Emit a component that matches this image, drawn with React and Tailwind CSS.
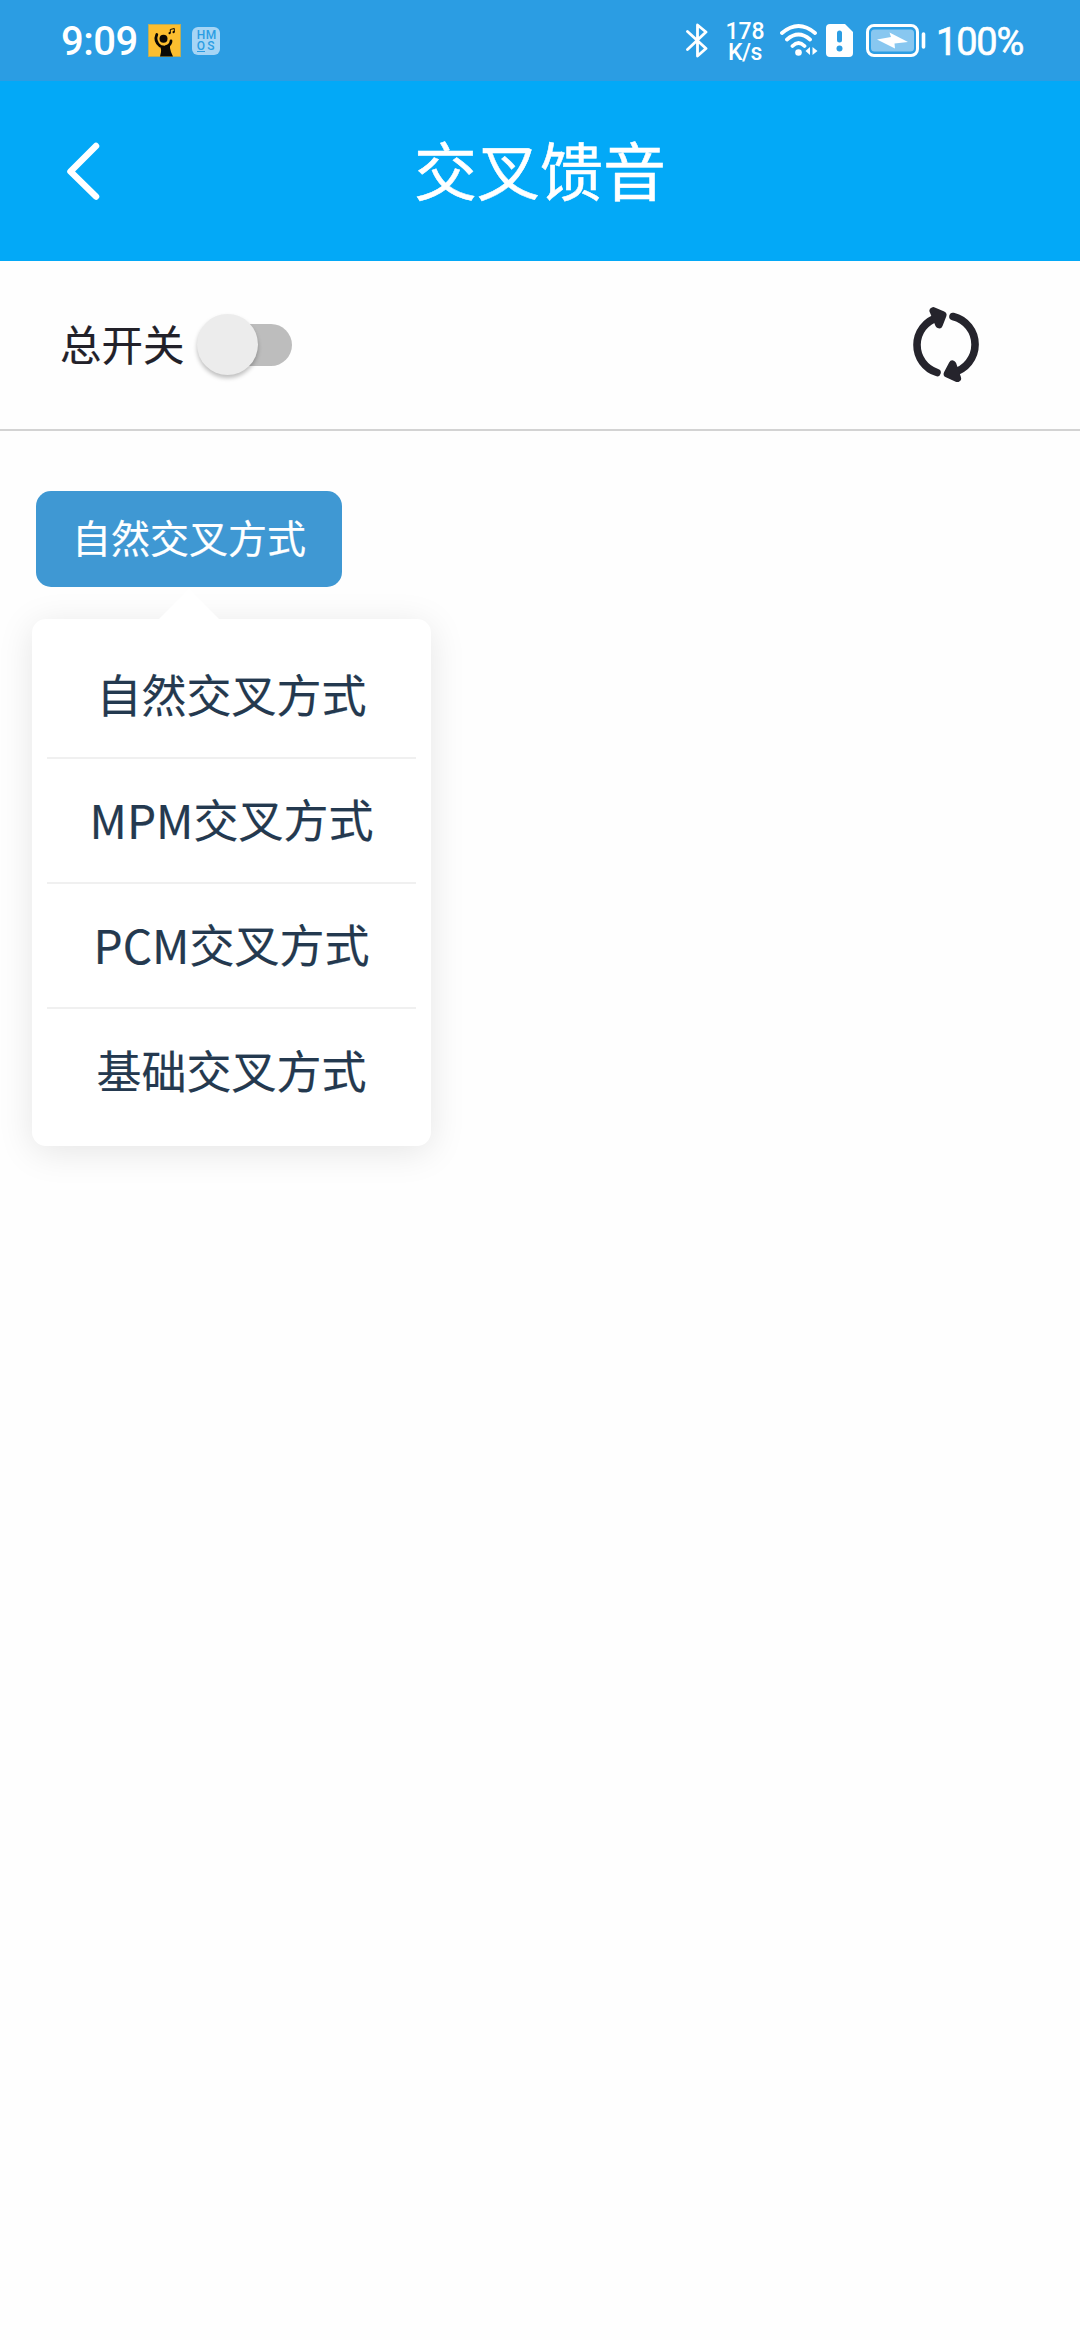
const options = [
  { latin: '', text: '自然交叉方式' },
  { latin: 'MPM', text: '交叉方式' },
  { latin: 'PCM', text: '交叉方式' },
  { latin: '', text: '基础交叉方式' },
];

function MusicAppIcon() {
  return (
    <svg className="ml-[11px] size-[33px]" viewBox="0 0 33 33">
      <rect width="33" height="33" fill="#b8ae5c" />
      <rect x="1" y="1" width="31" height="31" fill="#fcbe2f" />
      <circle cx="15.5" cy="14.800" r="4" fill="#0b0804" />
      <path d="M8.800 10.500 Q6 17 12 22 M23 17 Q23 21 18 22.500" fill="none" stroke="#0b0804" strokeWidth="2.800" strokeLinecap="round" />
      <path d="M10.500 20 Q16 23 22 20.500 Q21.500 24 23 28 L25 32.500 H12 L13 28 Q13.500 23.500 10.500 20 Z" fill="#0b0804" />
      <path d="M22.300 9 V5.500 L26.300 4.500 V8" fill="none" stroke="#0b0804" strokeWidth="1" />
      <circle cx="21.600" cy="9.200" r="1.100" fill="#0b0804" />
      <circle cx="25.600" cy="8.200" r="1.100" fill="#0b0804" />
    </svg>
  );
}

function StatusBar() {
  return (
    <div className="flex h-[81px] items-center bg-[#2b9de3] pr-[55px] pl-[61px] text-white">
      <span className="w-[76px] pt-[3px] text-[40px] leading-none font-medium tracking-[-0.5px] whitespace-nowrap">9:09</span>
      <MusicAppIcon />
      <div className="ml-[11px] grid size-[28px] grid-cols-2 place-items-center rounded-[6px] bg-[#a6d5f5] px-[4px] py-[3px] text-[12px] leading-[11px] font-medium text-[#2b9de3]">
        <span>H</span>
        <span>M</span>
        <span className="border-b border-[#2b9de3] leading-[10px]">O</span>
        <span>S</span>
      </div>

      <div className="ml-auto flex items-center">
        <svg className="h-[35px] w-[22px]" viewBox="0 0 22 35" fill="none" stroke="#fff" strokeWidth="2.800" strokeLinecap="round" strokeLinejoin="round">
          <path d="M1.500 8.500 L20 25.500 L11.500 33 V2 L20 9 L1.500 26.500" />
        </svg>
        <div className="ml-[18px] flex w-[39px] flex-col items-center pt-[2px] text-[23px] leading-[21px] font-medium">
          <span className="h-[21px]">178</span>
          <span className="h-[21px] tracking-[-0.5px]">K/s</span>
        </div>
        <svg className="ml-[15px] h-[33px] w-[38px]" viewBox="0 0 38 33" fill="none" stroke="#fff" strokeWidth="3.800" strokeLinecap="round">
          <path d="M2 9 Q18.500 -5 35 9 M7 15.500 Q18.500 5.500 30 15.500 M12.500 22 Q18.500 16 24.500 22" />
          <circle cx="18.500" cy="28.500" r="3.300" fill="#fff" stroke="none" />
          <path d="M30 23 V31 L25.500 27 Z M32.500 23 V31 L37.500 27 Z" fill="#fff" stroke="none" />
        </svg>
        <svg className="ml-[8px] h-[33px] w-[27px]" viewBox="0 0 27 33">
          <path d="M4 0 H19 L27 8 V29 Q27 33 23 33 H4 Q0 33 0 29 V4 Q0 0 4 0 Z" fill="#fff" />
          <path d="M13.500 9 V16" stroke="#2b9de3" strokeWidth="5" strokeLinecap="round" />
          <circle cx="13.500" cy="24.500" r="3" fill="#2b9de3" />
        </svg>
        <svg className="ml-[13px] h-[33px] w-[60px]" viewBox="0 0 60 33">
          <rect x="1.500" y="1.500" width="50" height="30" rx="6.500" fill="none" stroke="#fff" strokeWidth="3" />
          <rect x="5" y="5.500" width="43" height="22" rx="3.500" fill="#88c7f0" />
          <path d="M11 15.500 L25 13 L23.500 8.500 L42 18 L28.500 19.500 L29 24.500 Z" fill="#fff" />
          <path d="M57.500 10 V23" stroke="#fff" strokeWidth="3.600" strokeLinecap="round" />
        </svg>
        <span className="ml-[10.500px] w-[89px] pt-[3px] text-[38px] leading-none tracking-[-1.200px] whitespace-nowrap [-webkit-text-stroke:0.6px_white]">100%</span>
      </div>
    </div>
  );
}

function Header() {
  return (
    <header className="grid h-[180px] grid-cols-[1fr_auto_1fr] items-center bg-[#03a9f7] px-[66px] text-white">
      <svg className="h-[60px] w-[34px]" viewBox="0 0 34 60" fill="none" stroke="#fff" strokeWidth="6.500" strokeLinecap="round" strokeLinejoin="round">
        <path d="M30 5 L4.500 30.500 L30 55.500" />
      </svg>
      <h1 className="pt-[4px] text-[63px] leading-none [-webkit-text-stroke:0.5px_white]">交叉馈音</h1>
    </header>
  );
}

function MasterSwitch() {
  return (
    <section className="flex h-[170px] items-center border-b-2 border-[#d3d3d3] pr-[100px] pl-[60px] text-[#222129]">
      <span className="pt-[3px] text-[41.500px] leading-none [-webkit-text-stroke:0.2px_#222129]">总开关</span>
      <div className="mb-[1px] ml-[19.500px] flex h-[42px] w-[88px] items-center rounded-full bg-[#bdbdbd]">
        <div className="-ml-[7px] size-[61px] shrink-0 rounded-full bg-[#ececec] shadow-[0_3px_4px_rgba(0,0,0,0.25)]" />
      </div>
      <svg className="ml-auto h-[76px] w-[68px]" viewBox="0 0 68 76" fill="none" stroke="#25242c" strokeWidth="7.600" strokeLinecap="round" strokeLinejoin="round">
        <path d="M25 65.500 A28.800 28.800 0 0 1 25.500 10.500" />
        <path d="M41 9.500 A28.800 28.800 0 0 1 41 65.500" />
        <path d="M21.300 3.900 L30.700 8 L27 17.500 Z" fill="#25242c" />
        <path d="M45.300 71.300 L35.500 66.800 L40.500 57.300 Z" fill="#25242c" />
      </svg>
    </section>
  );
}

function ModeMenu() {
  return (
    <div className="relative mt-[32px] ml-[32px] w-[399px] rounded-[14px] bg-white px-[15px] pt-[15px] pb-[12px] text-[45px] text-[#24394f] shadow-[0_6px_36px_rgba(0,0,0,0.1)]">
      <svg className="absolute -top-[30px] left-[126px] h-[31px] w-[62px]" viewBox="0 0 62 31">
        <path d="M31 0 L62 31 H0 Z" fill="#fff" />
      </svg>
      <ul className="divide-y-2 divide-[#f0f0f0] [-webkit-text-stroke:0.2px_#24394f]">
        {options.map((o) => (
          <li key={o.latin + o.text} className="flex h-[125px] items-center justify-center pt-[3px] leading-none">
            {o.latin && <span className="pb-[6px] font-['Noto_Sans_CJK_SC'] text-[46px] leading-none">{o.latin}</span>}
            <span>{o.text}</span>
          </li>
        ))}
      </ul>
    </div>
  );
}

export default function App() {
  return (
    <div className="min-h-[2340px] w-[1080px] bg-[#fefefe] font-[Roboto,'Noto_Sans_CJK_SC',sans-serif]">
      <StatusBar />
      <Header />
      <MasterSwitch />
      <main className="pt-[60px]">
        <button className="ml-[36px] flex h-[96px] w-[306px] items-center justify-center rounded-[15px] bg-[#3f98d3] pt-[2px] text-[39px] leading-none text-white [-webkit-text-stroke:0.2px_white]">
          自然交叉方式
        </button>
        <ModeMenu />
      </main>
    </div>
  );
}
